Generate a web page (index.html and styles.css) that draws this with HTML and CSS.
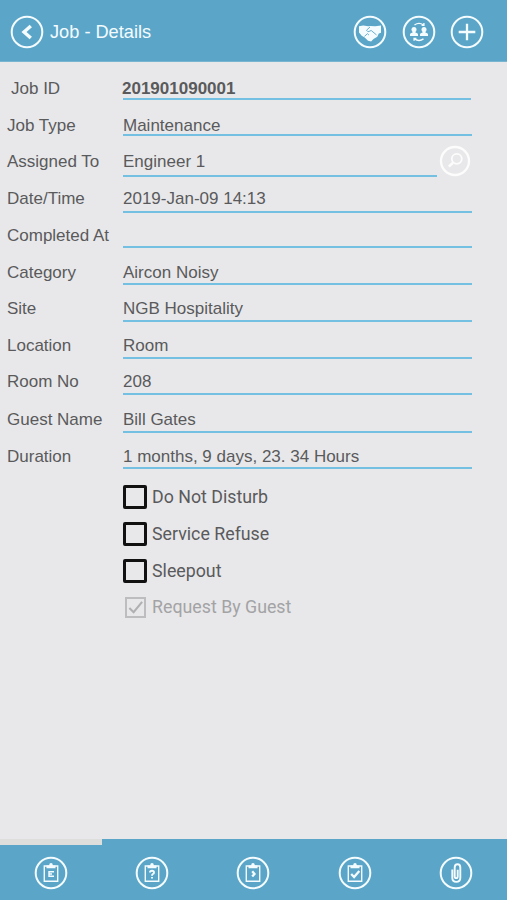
FILE: index.html
```
<!DOCTYPE html>
<html lang="en">
<head>
<meta charset="utf-8">
<title>Job - Details</title>
<link rel="stylesheet" href="styles.css">
</head>
<body>
<div class="screen">
  <header class="topbar">
    <svg class="icon back" viewBox="0 0 34 34"><circle cx="17" cy="17" r="15.3"/><path class="thick" d="M20.8 10.9 14 17l6.8 6.1"/></svg>
    <h1 class="title">Job - Details</h1>
    <div class="actions">
      <svg class="icon" viewBox="0 0 34 34"><circle cx="17" cy="17" r="15.3"/><path class="fill" d="M6 11.3l4.2-.8 5 .8 2-.3 5 .2 5.8-.7v7.2l-2.2.8-1.5 3.2-3.8 2.4-2.4 2.3-3.1-.6-3.3-3.4-3-1.6L6 17.5z"/><path class="cut" d="M17 12l-3.5 3.2 1.5 1.6 3.2-1.3 5.3 4.4M11.5 21.3l3-2.6 1.4 1.3"/></svg>
      <svg class="icon" viewBox="0 0 34 34"><circle cx="17" cy="17" r="15.3"/><g class="fill"><circle cx="12" cy="14.6" r="2.5"/><circle cx="22" cy="14.6" r="2.5"/><path d="M8 21v-1.8q0-1.2 2.6-1.7v-1.5h2.8v1.5q2.6.5 2.6 1.7V21zM18 21v-1.8q0-1.2 2.6-1.7v-1.5h2.8v1.5q2.6.5 2.6 1.7V21z"/></g><path class="thin" d="M12.5 10q4.5-3.2 9 0M21.9 8v2.3h-2.3M21.5 23.9q-4.5 3.2-9 0M12.1 25.8v-2.3h2.3"/></svg>
      <svg class="icon" viewBox="0 0 34 34"><circle cx="17" cy="17" r="15.3"/><path class="medium" d="M17 8.7v16.6M8.7 17h16.6"/></svg>
    </div>
  </header>

  <main class="form">
    <div class="row r-id"><span class="label">Job ID</span><span class="value">201901090001</span></div>
    <div class="row r-type"><span class="label">Job Type</span><span class="value">Maintenance</span></div>
    <div class="row r-assigned"><span class="label">Assigned To</span><span class="value">Engineer 1</span>
      <svg class="icon search" viewBox="0 0 32 32"><circle cx="16" cy="16" r="14"/><circle class="lens" cx="17.8" cy="13.8" r="5"/><path class="handle" d="M14 17.8l-4.2 3.8"/></svg>
    </div>
    <div class="row r-date"><span class="label">Date/Time</span><span class="value">2019-Jan-09 14:13</span></div>
    <div class="row r-completed"><span class="label">Completed At</span><span class="value"></span></div>
    <div class="row r-category"><span class="label">Category</span><span class="value">Aircon Noisy</span></div>
    <div class="row r-site"><span class="label">Site</span><span class="value">NGB Hospitality</span></div>
    <div class="row r-location"><span class="label">Location</span><span class="value">Room</span></div>
    <div class="row r-room"><span class="label">Room No</span><span class="value">208</span></div>
    <div class="row r-guest"><span class="label">Guest Name</span><span class="value">Bill Gates</span></div>
    <div class="row r-duration"><span class="label">Duration</span><span class="value">1 months, 9 days, 23. 34 Hours</span></div>

    <div class="checks">
      <div class="check"><span class="box"></span><span>Do Not Disturb</span></div>
      <div class="check"><span class="box"></span><span>Service Refuse</span></div>
      <div class="check"><span class="box"></span><span>Sleepout</span></div>
      <div class="check disabled"><span class="box"><svg class="tick" viewBox="0 0 18 18"><path d="M2.5 9.5l4.5 4.5 9-11"/></svg></span><span>Request By Guest</span></div>
    </div>
  </main>

  <nav class="tabs">
    <div class="tab active"><svg class="icon" viewBox="0 0 34 34"><circle cx="17" cy="17" r="15.3"/><path class="thin" d="M10.3 10h13.4v15.3H10.3z"/><path class="fill" d="M12.5 12.3V9.4h2.6q.2-2.4 1.9-2.4t1.9 2.4h2.6v2.9z"/><path class="thin" d="M14.5 15.7h5.5M14.5 18h3.5M14.5 20.3h5.5M15 15v6"/></svg></div>
    <div class="tab"><svg class="icon" viewBox="0 0 34 34"><circle cx="17" cy="17" r="15.3"/><path class="thin" d="M10.3 10h13.4v15.3H10.3z"/><path class="fill" d="M12.5 12.3V9.4h2.6q.2-2.4 1.9-2.4t1.9 2.4h2.6v2.9z"/><path class="mark" d="M15 16.4q0-1.6 2-1.6t2 1.6q0 1-1.1 1.6-.9.5-.9 1.7M17 20.9v1.7"/></svg></div>
    <div class="tab"><svg class="icon" viewBox="0 0 34 34"><circle cx="17" cy="17" r="15.3"/><path class="thin" d="M10.3 10h13.4v15.3H10.3z"/><path class="fill" d="M12.5 12.3V9.4h2.6q.2-2.4 1.9-2.4t1.9 2.4h2.6v2.9z"/><path class="medium" d="M16.2 15.2l2.3 2.7-2.3 2.7"/></svg></div>
    <div class="tab"><svg class="icon" viewBox="0 0 34 34"><circle cx="17" cy="17" r="15.3"/><path class="thin" d="M10.3 10h13.4v15.3H10.3z"/><path class="fill" d="M12.5 12.3V9.4h2.6q.2-2.4 1.9-2.4t1.9 2.4h2.6v2.9z"/><path class="medium" d="M13.2 18l2.9 3 5.2-6"/></svg></div>
    <div class="tab"><svg class="icon" viewBox="0 0 34 34"><circle cx="17" cy="17" r="15.3"/><path class="clip" d="M13.3 13.5v8.3q0 4.1 4 4.1t4-4.1V11.5q0-3.3-2.8-3.3t-2.8 3.3v9q0 1.6 1.5 1.6t1.5-1.6v-6.8"/></svg></div>
  </nav>
</div>
</body>
</html>
```
FILE: styles.css
```
* { box-sizing: border-box; }

body {
  margin: 0;
  background: #e8e8ea;
  color: #5a5a5c;
  font: 17px/26px "Liberation Sans", Arial, sans-serif;
}

.screen {
  display: flex;
  flex-direction: column;
  height: 900px;
}

.topbar {
  display: flex;
  align-items: center;
  height: 62px;
  padding: 2px 23px 0 10px;
  background: #5ba6c8;
  border-bottom: 1px solid #78b5d1;
  color: #f4fbff;
}

.title {
  margin: 1px 0 0 6px;
  font-size: 18.2px;
  font-weight: 400;
}

.actions {
  display: flex;
  gap: 14.5px;
  margin-left: auto;
}

.icon {
  display: block;
  flex: none;
  width: 34px;
  height: 34px;
  fill: none;
  stroke: #f4fcff;
  stroke-width: 2;
}

.icon .thick { stroke-width: 3.4; }
.icon .medium { stroke-width: 2.3; }
.icon .thin { stroke-width: 1.4; }
.icon .mark { stroke-width: 1.9; }
.icon .clip { stroke-width: 1.9; }
.icon .lens { stroke-width: 1.8; }
.icon .handle { stroke-width: 2.6; }
.icon .fill { fill: #f4fcff; stroke: none; }
.icon .cut { stroke: #5ba6c8; stroke-width: 0.9; }

.form {
  flex: 1;
  padding: 14px 35px 0 7px;
}

.row {
  display: flex;
  align-items: flex-start;
  height: 37px;
}

.label {
  flex: none;
  width: 116px;
  white-space: nowrap;
}

.value {
  flex: 1;
  height: 25px;
  border-bottom: 2px solid #74c0e2;
  white-space: nowrap;
}

.r-id .label { padding-left: 4px; }
.r-id .value { height: 24px; margin-right: 1px; font-weight: 700; text-indent: -1px; }
.r-type { height: 36px; }
.r-type .value { height: 23px; }
.r-assigned .value { height: 28px; }
.r-date .value { height: 27px; }
.r-category { height: 36px; }
.r-site .value,
.r-location .value,
.r-room .value,
.r-guest .value { height: 26px; }
.r-location { height: 36px; }
.r-room { height: 38px; }

.search {
  width: 32px;
  height: 32px;
  margin: -4px 1px 0 2px;
  stroke: #fcfcfc;
  stroke-width: 2.3;
}

.checks {
  margin-top: -2px;
  padding-left: 116px;
  font: 17.8px/24px Roboto, sans-serif;
}

.check {
  display: flex;
  align-items: center;
  gap: 5px;
  height: 36.7px;
}

.box {
  width: 24px;
  height: 24px;
  border: 3px solid #111;
  border-radius: 2px;
}

.disabled { color: #a3a3a5; }

.disabled .box {
  width: 21px;
  height: 21px;
  margin: 0 1px 0 2px;
  border: 2px solid #bdbdbf;
  border-radius: 0;
}

.tick {
  display: block;
  width: 17px;
  height: 17px;
  fill: none;
  stroke: #b0b0b2;
  stroke-width: 2.2;
}

.tabs {
  display: grid;
  grid-template-columns: repeat(5, 1fr);
  height: 61px;
  background: #5ba6c8;
}

.tab {
  display: flex;
  justify-content: center;
  padding-top: 11px;
  border-top: 6px solid transparent;
}

.tab.active {
  margin-right: -1px;
  border-top-color: #dedfdc;
}
```
